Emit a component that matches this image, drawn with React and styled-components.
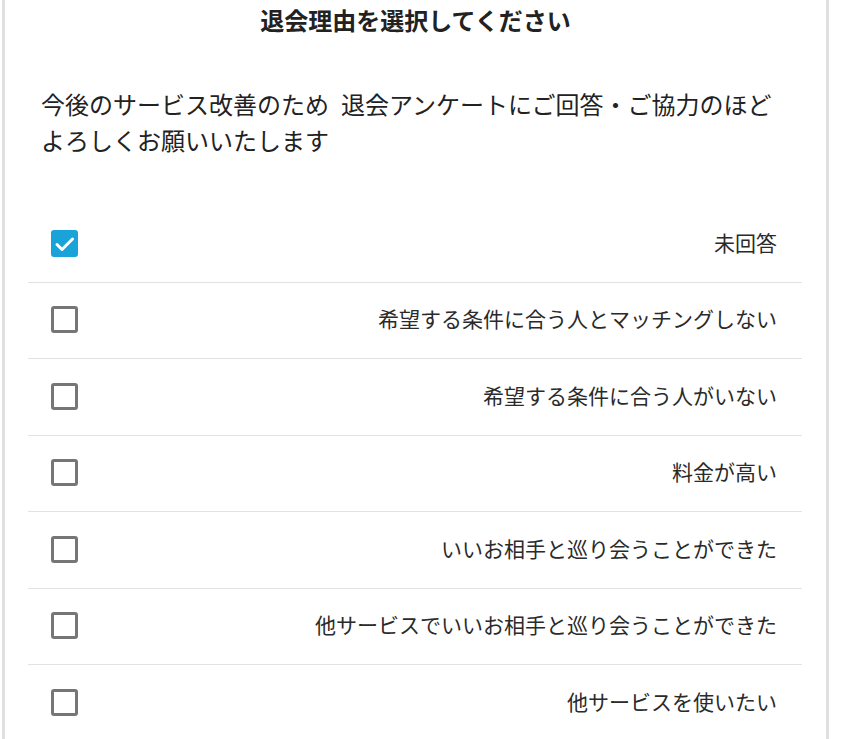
import React, { useState } from "react";
import styled, { createGlobalStyle } from "styled-components";

const reasons = [
  "未回答",
  "希望する条件に合う人とマッチングしない",
  "希望する条件に合う人がいない",
  "料金が高い",
  "いいお相手と巡り会うことができた",
  "他サービスでいいお相手と巡り会うことができた",
  "他サービスを使いたい",
];

export default function App() {
  const [checked, setChecked] = useState([0]);

  const toggle = (i) =>
    setChecked((prev) =>
      prev.includes(i) ? prev.filter((n) => n !== i) : [...prev, i]
    );

  return (
    <>
      <GlobalStyle />
      <Panel>
        <Title>退会理由を選択してください</Title>
        <Lead>
          今後のサービス改善のため{"\u2002"}退会アンケートにご回答・ご協力のほど
          <br />
          よろしくお願いいたします
        </Lead>
        <List>
          {reasons.map((label, i) => (
            <Row key={label} onClick={() => toggle(i)}>
              <Box checked={checked.includes(i)}>
                {checked.includes(i) ? (
                  <svg width="27" height="27" viewBox="0 0 27 27">
                    <path
                      d="M6 14.5l5 5L21.5 9"
                      fill="none"
                      stroke="#fff"
                      strokeWidth="3"
                      strokeLinecap="round"
                      strokeLinejoin="round"
                    />
                  </svg>
                ) : null}
              </Box>
              <Label>{label}</Label>
            </Row>
          ))}
        </List>
      </Panel>
    </>
  );
}

const GlobalStyle = createGlobalStyle`
  html, body {
    margin: 0;
    padding: 0;
    background: #fff;
  }
  body {
    font-family: "Noto Sans CJK JP", "Noto Sans", sans-serif;
    color: #222;
  }
`;

const Panel = styled.div`
  box-sizing: border-box;
  width: 827px;
  min-height: 739px;
  margin-left: 2px;
  border-left: 3px solid #e0e0e0;
  border-right: 3px solid #e0e0e0;
  background: #fff;
  padding-top: 2px;
`;

const Title = styled.h1`
  margin: 0;
  font-size: 24px;
  line-height: 36px;
  font-weight: 700;
  text-align: center;
  color: #222;
`;

const Lead = styled.p`
  margin: 48px 0 0;
  padding: 0 36px;
  font-size: 24px;
  line-height: 36px;
  color: #222;
`;

const List = styled.ul`
  list-style: none;
  margin: 48px 24px 0 23px;
  padding: 0;
`;

const Row = styled.li`
  box-sizing: border-box;
  height: 76.5px;
  display: flex;
  align-items: center;
  justify-content: space-between;
  padding: 0 25px 1px 23px;
  border-bottom: 1.5px solid #e2e2e2;
  cursor: pointer;
  &:last-child {
    border-bottom: none;
  }
`;

const Box = styled.span`
  box-sizing: border-box;
  width: 27px;
  height: 27px;
  border-radius: 3px;
  display: flex;
  align-items: center;
  justify-content: center;
  flex-shrink: 0;
  background: ${(p) => (p.checked ? "#19a3d8" : "#fff")};
  border: ${(p) => (p.checked ? "none" : "3px solid #767676")};
`;

const Label = styled.span`
  font-size: 21px;
  line-height: 30px;
  margin-bottom: 3px;
  color: #2a2a2a;
  text-align: right;
`;
